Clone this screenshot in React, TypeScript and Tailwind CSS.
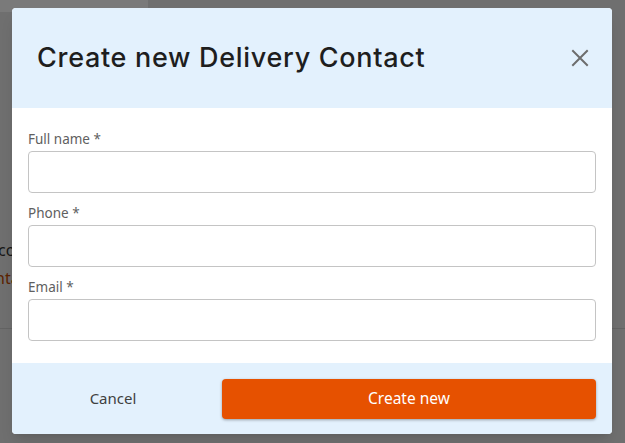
import React from "react";

const fields = [
  { id: "fullName", label: "Full name" },
  { id: "phone", label: "Phone" },
  { id: "email", label: "Email" },
];

const CloseIcon = () => (
  <svg width="18" height="18" viewBox="0 0 18 18" fill="none" stroke="currentColor" strokeWidth="2" strokeLinecap="square">
    <path d="M2 2L16 16M16 2L2 16" />
  </svg>
);

export default function App() {
  return (
    <div className="relative h-screen w-full overflow-hidden bg-[#e8e8e8] font-['Noto_Sans',sans-serif]">
      {/* page behind the dialog */}
      <div className="flex h-[12px]">
        <div className="w-[148px] bg-white" />
      </div>
      <div className="flex h-[317px] flex-col border-b border-[#d0d0d0] pt-[228px]">
        <div className="-ml-[2px] whitespace-nowrap text-[16px] leading-[20px] text-[#333]">contact</div>
        <div className="-ml-[5px] mt-[8px] whitespace-nowrap text-[16px] leading-[20px] text-[#c24a00]">ntact</div>
      </div>

      {/* overlay + dialog */}
      <div className="absolute inset-0 bg-black/[0.52]">
        <div className="ml-[12px] mt-[8px] flex w-[600px] flex-col overflow-hidden rounded-[4px] bg-white shadow-lg">
          <div className="flex h-[100px] items-center justify-between bg-[#e3f1fd] pl-[25px] pr-[23px]">
            <h2 className="font-['Inter',sans-serif] text-[27px] font-medium tracking-[0.7px] text-[#1e1e1e]">
              Create new Delivery Contact
            </h2>
            <button className="text-[#6d6d6d]" aria-label="Close">
              <CloseIcon />
            </button>
          </div>

          <div className="flex flex-col gap-[10px] px-[16px] pb-[22px] pt-[21px]">
            {fields.map((f) => (
              <div key={f.id} className="flex flex-col gap-[2px]">
                <label htmlFor={f.id} className="text-[13.5px] leading-[20px] text-[#606060]">
                  {f.label} *
                </label>
                <input
                  id={f.id}
                  className="h-[42px] w-full rounded-[4px] border border-[#c4c4c4] bg-white px-3 outline-none"
                />
              </div>
            ))}
          </div>

          <div className="flex h-[71px] items-center gap-[24px] bg-[#e3f1fd] px-[16px]">
            <button className="w-[170px] text-[15px] text-[#404040]">Cancel</button>
            <button className="h-[40px] flex-1 rounded-[4px] bg-[#e65100] text-[15.5px] text-white shadow-[0_1px_3px_rgba(0,0,0,0.35)]">
              Create new
            </button>
          </div>
        </div>
      </div>
    </div>
  );
}
